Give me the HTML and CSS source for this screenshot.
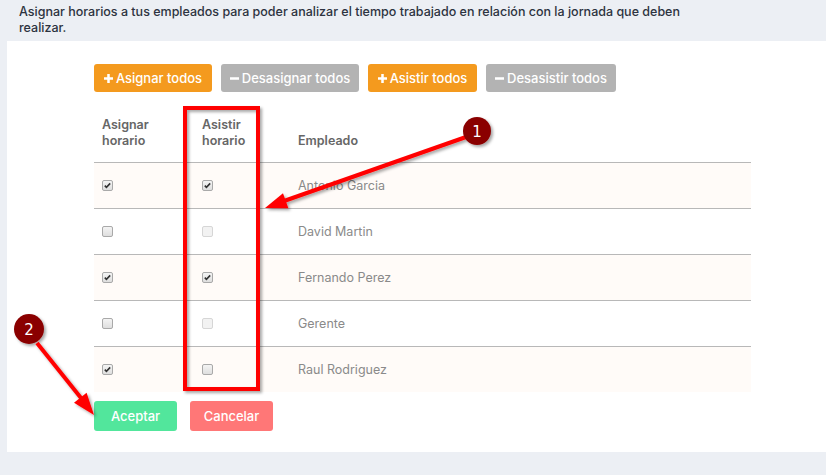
FILE: index.html
```html
<!DOCTYPE html>
<html lang="es">
<head>
  <meta charset="UTF-8">
  <title>Asignar horarios</title>
  <link rel="stylesheet" href="styles.css">
</head>
<body>

  <p class="intro">Asignar horarios a tus empleados para poder analizar el tiempo trabajado en relación con la jornada que deben realizar.</p>

  <div class="panel">
    <div class="acciones">
      <button class="btn naranja b-asignar">
        <svg class="ico" viewBox="0 0 10 10"><path d="M3.6 0h2.8v3.6H10v2.8H6.4V10H3.6V6.4H0V3.6h3.6z"/></svg>Asignar todos
      </button>
      <button class="btn gris b-desasignar">
        <svg class="ico" viewBox="0 0 10 10"><path d="M0 3.6h10v2.8H0z"/></svg>Desasignar todos
      </button>
      <button class="btn naranja b-asistir">
        <svg class="ico" viewBox="0 0 10 10"><path d="M3.6 0h2.8v3.6H10v2.8H6.4V10H3.6V6.4H0V3.6h3.6z"/></svg>Asistir todos
      </button>
      <button class="btn gris b-desasistir">
        <svg class="ico" viewBox="0 0 10 10"><path d="M0 3.6h10v2.8H0z"/></svg>Desasistir todos
      </button>
    </div>

    <table class="tabla">
      <thead>
        <tr>
          <th class="c1">Asignar<br>horario</th>
          <th class="c2">Asistir<br>horario</th>
          <th>Empleado</th>
        </tr>
      </thead>
      <tbody id="filas"></tbody>
    </table>

    <div class="pie">
      <button class="btn grande verde">Aceptar</button>
      <button class="btn grande rojo">Cancelar</button>
    </div>
  </div>

  <!-- anotaciones de la captura -->
  <svg class="notas" width="826" height="475" viewBox="0 0 826 475">
    <defs>
      <filter id="sombra" x="-20%" y="-20%" width="140%" height="140%">
        <feDropShadow dx="2" dy="2" stdDeviation="1.5" flood-color="#000" flood-opacity="0.35"/>
      </filter>
    </defs>
    <g filter="url(#sombra)">
      <rect x="185" y="108" width="73" height="281" fill="none" stroke="#ff0000" stroke-width="4"/>
      <line x1="466" y1="137" x2="284" y2="201" stroke="#ff0000" stroke-width="4"/>
      <polygon points="265,208 288.4,208.2 283,193.2" fill="#ff0000"/>
      <line x1="37" y1="343" x2="81" y2="398" stroke="#ff0000" stroke-width="4"/>
      <polygon points="94,415 86.6,392.8 74,402.8" fill="#ff0000"/>
      <circle cx="477" cy="131" r="14" fill="#8a0000"/>
      <circle cx="29" cy="329" r="15" fill="#8a0000"/>
    </g>
    <text x="477" y="136.5" class="num">1</text>
    <text x="29" y="335" class="num">2</text>
  </svg>

  <script>
    const empleados = [
      { nombre: 'Antonio Garcia', asignar: true, asistir: true, activo: true },
      { nombre: 'David Martin', asignar: false, asistir: false, activo: false },
      { nombre: 'Fernando Perez', asignar: true, asistir: true, activo: true },
      { nombre: 'Gerente', asignar: false, asistir: false, activo: false },
      { nombre: 'Raul Rodriguez', asignar: true, asistir: false, activo: true }
    ];

    const check = '<svg viewBox="0 0 10 10"><path d="M2 5.2l1.8 1.9L8 2.6" fill="none" stroke="#333" stroke-width="1.8"/></svg>';

    function casilla(marcada, activa) {
      let clase = 'chk';
      if (!activa) clase += ' inactiva';
      return '<span class="' + clase + '">' + (marcada ? check : '') + '</span>';
    }

    const filas = document.getElementById('filas');
    empleados.forEach(e => {
      const tr = document.createElement('tr');
      tr.innerHTML =
        '<td>' + casilla(e.asignar, true) + '</td>' +
        '<td>' + casilla(e.asistir, e.activo) + '</td>' +
        '<td class="nombre">' + e.nombre + '</td>';
      filas.appendChild(tr);
    });
  </script>
</body>
</html>
```

FILE: styles.css
```css
:root {
  --fondo: #eceff4;
  --blanco: #ffffff;
  --naranja: #f49a1e;
  --gris: #b3b3b3;
  --verde: #52e69c;
  --rojo: #ff7777;
  --linea: #b8b8b8;
  --zebra: #fffbf8;
}

body {
  font-family: Inter, "Noto Sans", sans-serif;
  margin: 0;
  background-color: var(--fondo);
  color: #333;
  position: relative;
  width: 826px;
  height: 475px;
  overflow: hidden;
}

.intro {
  margin: 0;
  padding: 4px 0 0 19px;
  width: 700px;
  font-size: 12.5px;
  line-height: 16px;
  font-weight: 500;
  color: #2c3340;
}

.panel {
  background-color: var(--blanco);
  margin: 5px 0 0 7px;
  padding: 23px 0 21px 87px;
}

.acciones {
  display: flex;
  gap: 9px;
}

.btn {
  display: inline-flex;
  align-items: center;
  justify-content: center;
  gap: 3px;
  height: 28px;
  padding: 0;
  border: none;
  border-radius: 3px;
  color: var(--blanco);
  font-family: inherit;
  font-size: 13px;
  font-weight: 500;
  cursor: pointer;
}

.b-asignar { width: 118px; }
.b-desasignar { width: 138px; }
.b-asistir { width: 109px; }
.b-desasistir { width: 130px; }

.btn .ico {
  width: 9px;
  height: 9px;
  fill: var(--blanco);
}

.naranja { background-color: var(--naranja); }
.gris { background-color: var(--gris); }
.verde { background-color: var(--verde); }
.rojo { background-color: var(--rojo); }

.tabla {
  margin-top: 14px;
  width: 657px;
  border-collapse: collapse;
  font-size: 12.5px;
}

.tabla th {
  text-align: left;
  vertical-align: bottom;
  padding: 11px 8px 13px;
  line-height: 16px;
  font-weight: 600;
  color: #666;
  border-bottom: 1px solid var(--linea);
}

.tabla th.c1 { width: 84px; }
.tabla th.c2 { width: 80px; }

.tabla td {
  height: 45px;
  padding: 0 8px;
  vertical-align: middle;
  border-top: 1px solid var(--linea);
}

.tabla tbody tr:first-child td { border-top: none; }

.tabla tbody tr:nth-child(odd) { background-color: var(--zebra); }

.nombre {
  color: #8a8a8a;
  font-weight: 400;
}

.chk {
  display: block;
  width: 9px;
  height: 9px;
  border: 1px solid #a9a9a9;
  border-radius: 2px;
  background: linear-gradient(#f4f4f4, #dedede);
}

.chk svg {
  display: block;
  width: 9px;
  height: 9px;
}

.chk.inactiva {
  border-color: #d6d6d6;
  background: #f2f2f2;
}

.pie {
  display: flex;
  gap: 13px;
  margin-top: 9px;
}

.btn.grande {
  width: 83px;
  height: 30px;
  font-size: 13px;
}

.notas {
  position: absolute;
  top: 0;
  left: 0;
  pointer-events: none;
}

.notas .num {
  fill: var(--blanco);
  font-family: "DejaVu Sans", sans-serif;
  font-size: 15px;
  text-anchor: middle;
}
```
